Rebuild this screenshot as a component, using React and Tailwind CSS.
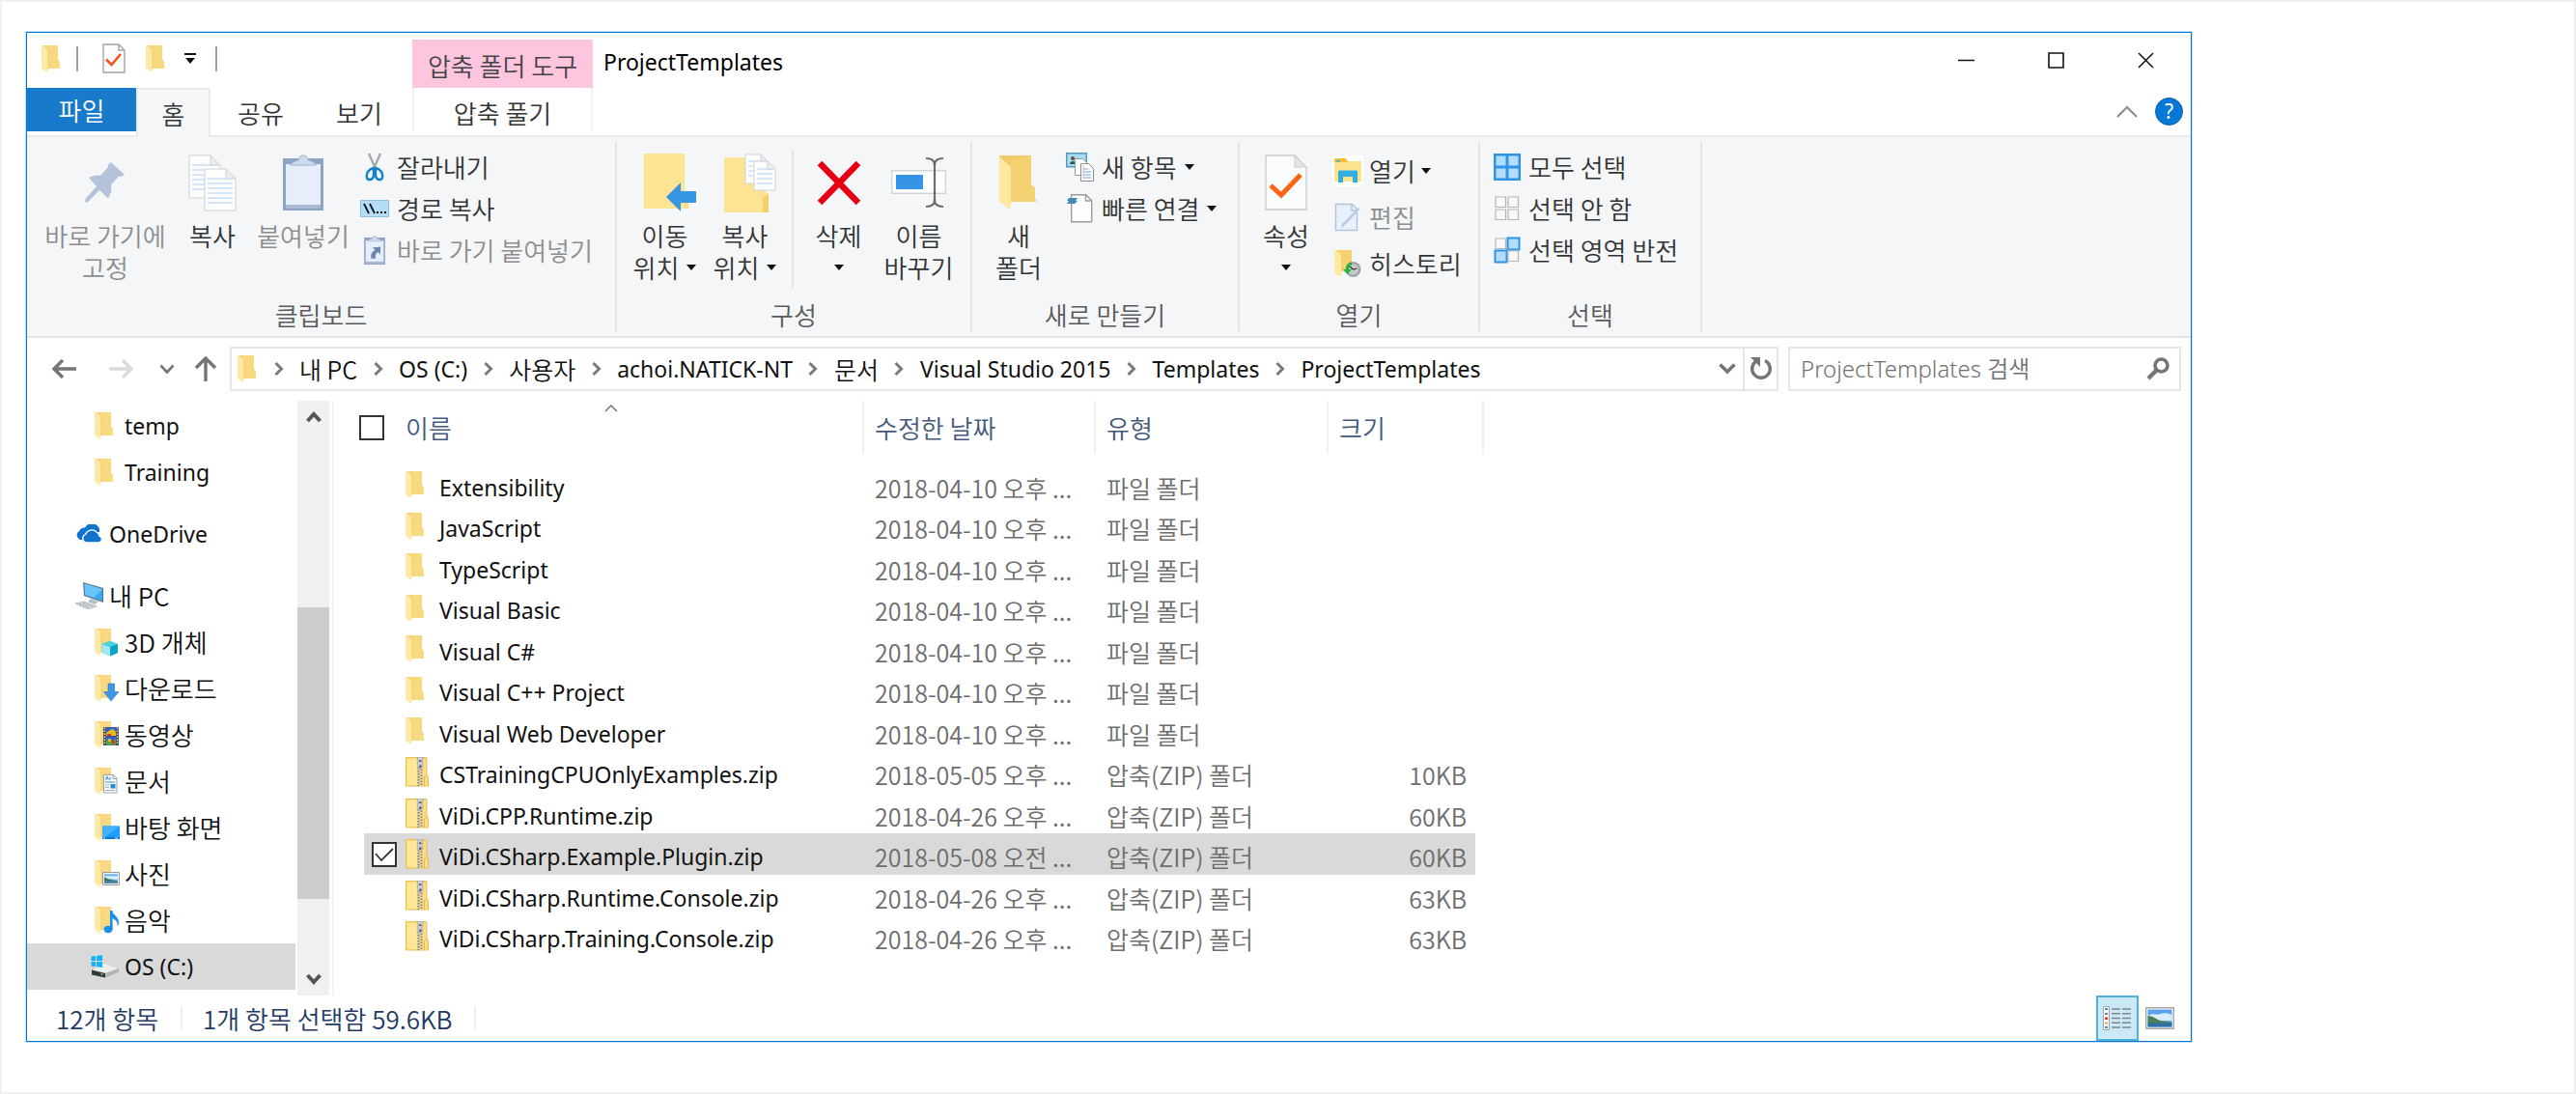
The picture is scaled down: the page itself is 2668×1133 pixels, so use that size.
import React from "react";

const KO = "font-['Noto_Sans_CJK_KR','Noto_Sans',sans-serif]";

/* ---------- small building icons ---------- */

function Folder({ className = "h-[28px] w-[19px]" }) {
  return (
    <svg viewBox="0 0 19 28" className={"shrink-0 " + className} aria-hidden="true">
      <path d="M1 0h16v14l2 4v6H5z" fill="#f6d57a" />
      <path d="M7 0h10v14l2 4v6H7z" fill="#f9d97f" />
      <path d="M0 1l1-1 5 4 1 3v17l-1 4-6-4z" fill="#fee9a6" />
      <path d="M6 5l1 2v17" fill="none" stroke="#ebc765" strokeWidth="0.7" />
    </svg>
  );
}

function Zip() {
  return (
    <svg viewBox="0 0 24 31" className="h-[31px] w-[24px] shrink-0" aria-hidden="true">
      <path d="M0.5 0.5h21.500V18l1.500 3v9H.5z" fill="#fbdd85" stroke="#ecc04a" />
      <path d="M2 2h10v27H2z" fill="#ffe798" />
      <path d="M19.500 30v-9l3-3" fill="none" stroke="#e9b93c" />
      <path d="M12 1h6v29h-6z" fill="#e9d59a" />
      <path d="M13.500 11v19" stroke="#77797c" strokeWidth="1.800" strokeDasharray="1.500 1.500" />
      <path d="M16.500 12.500v17.500" stroke="#8b8d90" strokeWidth="1.800" strokeDasharray="1.500 1.500" />
      <path d="M12 0h6.500l-1 5 .5 5-3 3-3-3 .5-5z" fill="#c9ccd1" stroke="#8f9296" strokeWidth=".5" />
      <path d="M14 3.500h2.500v1.500H14zM14.300 8.500h2v2.500h-2z" fill="#4c4f53" />
    </svg>
  );
}

/* Folder with a small badge at its lower right corner. */
function Badged({ children }) {
  return (
    <svg viewBox="0 0 26 29" className="h-[29px] w-[26px] shrink-0" aria-hidden="true">
      <path d="M1 0h16v14l2 4v6H5z" fill="#f8d981" />
      <path d="M0 1l1-1 5 4 1 3v17l-1 4-6-4z" fill="#fee9a6" />
      <path d="M6 5l1 2v17" fill="none" stroke="#ebc765" strokeWidth="0.7" />
      {children}
    </svg>
  );
}

const Badge3D = () => (
  <Badged>
    <path d="M7.500 16l8.500-3 8 3v9l-8 3.500-8.500-3.500z" fill="#2fc3dc" />
    <path d="M7.500 16l8.500 3v9.500L7.500 25z" fill="#a4e9f2" />
    <path d="M16 19l8-3v9l-8 3.500z" fill="#0ba3c7" />
    <path d="M7.500 16l8.500-3 8 3-8 3z" fill="#4fd0e0" />
  </Badged>
);
const BadgeDown = () => (
  <Badged>
    <path d="M14 9h6.500v8.500H25L17 27l-7.500-9.500H14z" fill="#3b97e6" stroke="#2277c9" strokeWidth=".6" />
  </Badged>
);
const BadgeVideo = () => (
  <Badged>
    <path d="M9 6h16v19H9z" fill="#4a4d54" />
    <path d="M12 6.500h10v8.500H12zM12 16h10v8.500H12z" fill="#2c62d6" />
    <path d="M12 12l4-3 3-1 3 3v4H12z" fill="#e8b91e" />
    <path d="M12 20l4-2 2 3 4-3v6.500H12z" fill="#5aa63c" />
    <path d="M13 13h4v2h-4zM18 20h3v3h-3z" fill="#d8321e" />
    <path d="M14 18h3v3h-3z" fill="#e8b91e" />
    <path d="M10.500 6.500v18M23.500 6.500v18" stroke="#d9dbe0" strokeWidth="1.400" strokeDasharray="1.500 1.500" />
  </Badged>
);
const BadgeDoc = () => (
  <Badged>
    <path d="M9.500 7.500h10l3.500 3.500v15h-13.500z" fill="#f8fafc" stroke="#9aa3ad" />
    <path d="M19 7.500v4h4" fill="none" stroke="#9aa3ad" />
    <path d="M11.500 12.500l1.500-3 1.500 3M16 10v2.500" fill="none" stroke="#3d97d3" strokeWidth="1.200" />
    <path d="M11 15h10" stroke="#58a6dd" strokeWidth="1.200" />
    <path d="M11 18h4M11 20.500h4M11 23.500h10" stroke="#a5abb1" strokeWidth="1.200" />
    <path d="M16.500 17h5v4.500h-5z" fill="#2c8bd0" />
  </Badged>
);
const BadgeDesktop = () => (
  <Badged>
    <path d="M8 12.500h18v13H8z" fill="#1a9dfc" />
    <path d="M8 12.500h18L11 24H8z" fill="#43b1ff" />
    <path d="M8 24h18v2H8z" fill="#0f79d3" />
    <path d="M9 24.500h2v1H9zM21 24.500h3v1h-3z" fill="#cfeaff" />
  </Badged>
);
const BadgePicture = () => (
  <Badged>
    <path d="M8.500 12.500h17v13h-17z" fill="#f6f6f6" stroke="#9a9a9a" />
    <path d="M10 14h14v10H10z" fill="#75bdf3" />
    <path d="M10 16.500h14v3H10z" fill="#dceffb" />
    <path d="M10 17.500l5 2 9 2v1H10z" fill="#44705a" />
    <path d="M10 21.500h14V24H10z" fill="#4c87b4" />
  </Badged>
);
const BadgeMusic = () => (
  <Badged>
    <ellipse cx="14" cy="23.500" rx="4.500" ry="3.800" fill="#1a8fee" />
    <path d="M16 4h2.500c0 5 7 6 6.500 13 0 2-1.200 3-1.500 3 .8-4-1.500-6-5-8v12H16z" fill="#1a8fee" />
  </Badged>
);

function Cloud() {
  return (
    <svg viewBox="0 0 29 20" className="h-[20px] w-[29px]" aria-hidden="true">
      <path d="M5 16a5 5 0 0 1-1-9A6 6 0 0 1 10 3.500a8 8 0 0 1 14-.5c1 1.200 1.300 3 1.200 4.500L12 16z" fill="#0f73cf" />
      <path d="M11 19a4.500 4.500 0 0 1-.5-8.500A7 7 0 0 1 22 8a5 5 0 0 1 2.800 4A3.600 3.600 0 0 1 24.500 19z" fill="#0f73cf" stroke="#fff" strokeWidth="1.300" />
    </svg>
  );
}

function Pc() {
  return (
    <svg viewBox="0 0 29 28" className="h-[28px] w-[29px]" aria-hidden="true">
      <path d="M8 0l21 6v15L9 14z" fill="#5b7185" />
      <path d="M9.500 1.500L28 7v12.500L10 13z" fill="#37a9f4" />
      <path d="M9.500 1.500L28 7l-9 9-9-3z" fill="#68c4fb" />
      <path d="M16 17l8 3-4 3-7-3z" fill="#b4bec6" />
      <path d="M0 22l9-2 13 5-9 3z" fill="#d5d9dc" stroke="#99a1a8" strokeWidth=".6" />
      <path d="M4 22.500l10 3.500M8 21.500l10 3.500" stroke="#8b949b" strokeWidth=".8" strokeDasharray="2 1" />
    </svg>
  );
}

function Drive() {
  return (
    <svg viewBox="0 0 30 24" className="h-[24px] w-[30px]" aria-hidden="true">
      <path d="M1 14l13-5 15 5v4l-14 5.500-14-3z" fill="#c4c6c8" />
      <path d="M14 9l15 5-14 5-14-3.500z" fill="#eceded" />
      <path d="M1 15.500L15 19v4.500L1 20.500z" fill="#34383b" />
      <path d="M15 19l14-5v3.500l-14 6z" fill="#b3b5b8" />
      <path d="M.5 1.500L5 1v5H.5zM6 .9L12 0v6H6zM.5 7H5v5l-4.500-.5zM6 7h6v6l-6-.9z" fill="#12b3f2" />
      <circle cx="11.500" cy="20" r="1" fill="#5fe36b" />
    </svg>
  );
}

const Caret = () => (
  <svg viewBox="0 0 10 6" className="h-[6px] w-[10px] shrink-0" aria-hidden="true">
    <path d="M0 0h10L5 6z" fill="#111" />
  </svg>
);

const CheckDoc = ({ className }) => (
  <svg viewBox="0 0 44 58" className={className} aria-hidden="true">
    <path d="M1 1h30l12 12v44H1z" fill="#fafbfc" stroke="#c8cacc" strokeWidth="1.300" />
    <path d="M31 1v12h12z" fill="#e3e6e8" stroke="#c8cacc" />
    <path d="M6 32l11 10L37 21" fill="none" stroke="#fb6415" strokeWidth="5" />
  </svg>
);

const SmallCheckDoc = () => (
  <svg viewBox="0 0 24 31" className="h-[31px] w-[24px]" aria-hidden="true">
    <path d="M1 1h16l6 6v23H1z" fill="#fafbfc" stroke="#a3a5a7" strokeWidth="1.400" />
    <path d="M17 1v6h6" fill="none" stroke="#a3a5a7" strokeWidth="1.400" />
    <path d="M4 16.500l5.500 5.500L19 11" fill="none" stroke="#f4561a" strokeWidth="2.600" />
  </svg>
);

/* ---------- ribbon icons ---------- */

const Pin = () => (
  <svg viewBox="0 0 42 42" className="h-[42px] w-[42px]" aria-hidden="true">
    <path d="M27 0l14 13-4 2-2-.5-8 9c1 5 0 9-3 14L15 29 2 42l-2-1 .500-3L12 25 4 16c4-2 8-3 12-2l8-9-.500-2z" fill="#b4c3da" />
  </svg>
);

function Sheet({ x, y, w, h, fold, stroke = "#cfd3d6", line = "#d5e6fa" }) {
  const rows = [];
  for (let i = y + fold; i < y + h - 4; i += 5) rows.push(i);
  return (
    <g>
      <path d={`M${x} ${y}h${w - fold}l${fold} ${fold}v${h - fold}h-${w}z`} fill="#fdfdfe" stroke={stroke} />
      {rows.map((r) => (
        <path key={r} d={`M${x + 3} ${r}h${w - 6}`} stroke={line} strokeWidth="2" />
      ))}
      <path d={`M${x + w - fold} ${y}v${fold}h${fold}z`} fill="#eceff1" stroke={stroke} />
    </g>
  );
}

const CopyIcon = () => (
  <svg viewBox="0 0 50 59" className="h-[59px] w-[50px]" aria-hidden="true">
    <Sheet x={1} y={1} w={32} h={44} fold={10} />
    <Sheet x={17} y={15} w={32} h={43} fold={10} />
  </svg>
);

const Clipboard = ({ className = "h-[58px] w-[42px]", arrow }) => (
  <svg viewBox="0 0 42 58" className={className} aria-hidden="true">
    <path d="M1.500 5.500h39v51h-39z" fill="#e6eefb" stroke="#8fa3c4" strokeWidth="3" />
    <path d="M3 52h36v4H3z" fill="#a9b9d4" />
    <path d="M3 5h36v5H3z" fill="#8fa3c4" />
    <path d="M8 11c1-3 4-4 8-5 0-3 2-5 5-5s5 2 5 5c4 1 7 2 8 5z" fill="#cddaee" stroke="#9db0cd" />
    {arrow && <path d="M14 46c-1-9 1-14 8-17l-5-5 16-2-1 16-4-5c-5 3-6 6-5 13z" fill="#6c84b0" />}
  </svg>
);

const Scissors = () => (
  <svg viewBox="0 0 20 30" className="h-[30px] w-[20px]" aria-hidden="true">
    <path d="M4 1l8 18M16 1L8 19" stroke="#a6a9ac" strokeWidth="2.400" />
    <path d="M9 16c-5 1-8 5-7 10 1 3 6 3 7-2zM11 16c5 1 8 5 7 10-1 3-6 3-7-2z" fill="none" stroke="#1482cb" strokeWidth="2.400" />
  </svg>
);

const PathIcon = () => (
  <svg viewBox="0 0 30 18" className="h-[18px] w-[30px]" aria-hidden="true">
    <path d="M.5.5h29v17H.5z" fill="#b3def9" stroke="#8cbfe3" />
    <path d="M4 4l5 10M10 4l5 10" stroke="#111" strokeWidth="1.800" />
    <path d="M17 12h2v2h-2zM21 12h2v2h-2zM25 12h2v2h-2z" fill="#111" />
  </svg>
);

const MoveTo = () => (
  <svg viewBox="0 0 54 60" className="h-[60px] w-[54px]" aria-hidden="true">
    <path d="M0 0h42v38l4 5v14H0z" fill="#fbdb83" />
    <path d="M0 0h42v57H0z" fill="#fde394" />
    <path d="M23 45l15-15v9h16v12H38v9z" fill="#3796e4" />
  </svg>
);

const CopyTo = () => (
  <svg viewBox="0 0 54 61" className="h-[61px] w-[54px]" aria-hidden="true">
    <path d="M0 4h42v34l4 5v18H0z" fill="#fde394" />
    <path d="M40 61V46l6-5v20z" fill="#f6cf6b" />
    <Sheet x={22} y={1} w={23} h={30} fold={7} />
    <Sheet x={31} y={8} w={22} h={30} fold={8} />
  </svg>
);

const DeleteIcon = () => (
  <svg viewBox="0 0 46 47" className="h-[47px] w-[46px]" aria-hidden="true">
    <path d="M3 3l40 41M43 3L3 44" stroke="#e60012" strokeWidth="6.500" />
  </svg>
);

const RenameIcon = () => (
  <svg viewBox="0 0 57 54" className="h-[54px] w-[57px]" aria-hidden="true">
    <path d="M.7 14.700h55.600v23.600H.7z" fill="#fdfdfd" stroke="#d2d5d8" strokeWidth="1.400" />
    <path d="M5 19h28v15H5z" fill="#3594e6" />
    <path d="M36 2c6 0 9 2 9 7 0-5 3-7 9-7M45 8v38M36 52c6 0 9-2 9-7 0 5 3 7 9 7" fill="none" stroke="#6d6d6d" strokeWidth="2.200" />
  </svg>
);

const NewFolder = () => (
  <svg viewBox="0 0 40 56" className="h-[56px] w-[40px]" aria-hidden="true">
    <path d="M30 48l9-3v3z" fill="#ddd" />
    <path d="M0 0h33v30l4 4v14H4z" fill="#efcb69" />
    <path d="M12 6L33 0v30l4 4v14H12z" fill="#f5d271" />
    <path d="M0 1l12 11v37l-1 7L0 47z" fill="#ffe89f" />
  </svg>
);

const NewItem = () => (
  <svg viewBox="0 0 29 30" className="h-[30px] w-[29px]" aria-hidden="true">
    <path d="M.7.7h20.600v14H.7z" fill="#a8dcf3" stroke="#5a97b8" strokeWidth="1.400" />
    <path d="M4 12c0-4 6-4 6 0z" fill="#24624b" />
    <circle cx="7" cy="6" r="2" fill="#6b4a2f" />
    <path d="M9.500 6.500h8l4 4v13h-12z" fill="#fff" stroke="#9a9a9a" />
    <path d="M15.500 11.500h8l5 5v13h-13z" fill="#fff" stroke="#8c8c8c" />
    <path d="M18 17h5M18 20h8M18 23h8M18 26h8" stroke="#9cc4ef" strokeWidth="1.500" />
    <path d="M18 13v15" stroke="#e9a0a0" strokeWidth=".8" />
  </svg>
);

const QuickLink = () => (
  <svg viewBox="0 0 27 31" className="h-[31px] w-[27px]" aria-hidden="true">
    <path d="M4.700 1.700h15l6 6v22h-21z" fill="#fdfdfd" stroke="#9c9c9c" strokeWidth="1.400" />
    <path d="M19.500 2v6h6" fill="none" stroke="#9c9c9c" strokeWidth="1.400" />
    <path d="M2 5h9l-2 3h2l-3 3H0l2-3H0z" fill="#4288b9" />
  </svg>
);

const OpenIcon = () => (
  <svg viewBox="0 0 32 32" className="h-[32px] w-[32px]" aria-hidden="true">
    <path d="M0 0h32v32H0z" fill="#fff" />
    <path d="M2 6h28v21H2z" fill="#fde28c" />
    <path d="M2 3h12l2 4H2z" fill="#f8c033" />
    <path d="M4 5h4v1.500H4z" fill="#3ab1e4" />
    <path d="M6 17c0-1 .5-1.500 1.500-1.500h17c1 0 1.500.5 1.500 1.500v11h-5v-6H11v6H6z" fill="#31afe3" />
  </svg>
);

const EditIcon = () => (
  <svg viewBox="0 0 28 30" className="h-[30px] w-[28px]" aria-hidden="true">
    <path d="M1.500 1.500h17l5 5v22h-22z" fill="#e8f0fb" stroke="#b2c3dd" strokeWidth="1.400" />
    <path d="M18 2v6h6" fill="none" stroke="#b2c3dd" strokeWidth="1.400" />
    <path d="M27 6L10 24l-3 2 1-4L25 5z" fill="#b9c9e0" />
  </svg>
);

const HistoryIcon = () => (
  <svg viewBox="0 0 28 29" className="h-[29px] w-[28px]" aria-hidden="true">
    <path d="M1 0h17v22H6z" fill="#f6d071" />
    <path d="M0 1l1-1 5 4 1 3v17l-1 4-6-4z" fill="#ffe9a3" />
    <circle cx="19.500" cy="20" r="8" fill="#a3a6a8" />
    <circle cx="19.500" cy="20" r="5.500" fill="#c7cacc" />
    <path d="M16 17l3.500 3 4-1" fill="none" stroke="#333" strokeWidth="1.200" />
    <path d="M9 20h3c0-4 2-7 6-7.500v3c-2 .5-3 2-3 4.500h3l-4.500 5z" fill="#22b33a" />
  </svg>
);

function Grid4({ on }) {
  const cells = [[2, 2], [15, 2], [2, 15], [15, 15]];
  return (
    <svg viewBox="0 0 28 28" className="h-[28px] w-[28px]" aria-hidden="true">
      {on.length === 4 && <path d="M0 0h28v28H0z" fill="#2f94e4" />}
      {cells.map(([x, y], i) =>
        on.includes(i) ? (
          <path key={i} d={`M${x - 0.5} ${y - 0.5}h12v12h-12z`} fill="#b3dcfd" stroke="#2f94e4" strokeWidth="2" />
        ) : (
          <path key={i} d={`M${x} ${y}h10.500v10.500h-10.500z`} fill="#f9f9f9" stroke="#b4b4b4" strokeWidth="1.200" />
        )
      )}
    </svg>
  );
}

/* ---------- ribbon parts ---------- */

function Big({ icon, lines, caret, className = "", dim, iconPad = "" }) {
  return (
    <button className={"flex flex-col items-center " + className}>
      <span className={"flex h-[80px] items-center justify-center pt-1 " + iconPad}>{icon}</span>
      {lines.map((l, i) => (
        <span key={l + i} className={"flex h-[33px] items-center gap-2 whitespace-nowrap " + (dim ? "text-[#8d8d8d]" : "text-[#333]")}>
          {l}
          {caret && i === lines.length - 1 && <Caret />}
        </span>
      ))}
    </button>
  );
}

function Small({ icon, label, caret, dim, iconBox = "w-[28px]", tall }) {
  return (
    <button className={"flex items-center whitespace-nowrap " + (tall ? "h-[48px] gap-1.5" : "h-[43px] gap-2")}>
      <span className={"flex shrink-0 items-center justify-center " + iconBox}>{icon}</span>
      <span className={dim ? "text-[#8d8d8d]" : "text-[#333]"}>{label}</span>
      {caret && <Caret />}
    </button>
  );
}

function Group({ label, className, children }) {
  return (
    <section className={"flex shrink-0 flex-col border-r-2 border-[#e2e4e6] " + className} aria-label={label}>
      <div className="flex flex-1 items-start">{children}</div>
      <div className="flex h-[34px] items-center justify-center text-[#5a5a5a]">{label}</div>
    </section>
  );
}

function Ribbon() {
  return (
    <div className={"flex h-[208px] border-b-2 border-[#e2e4e7] bg-[#f4f6f8] py-[5px] text-[26px] font-[350] leading-none " + KO}>
      <Group label="클립보드" className="w-[611px]">
        <Big className="ml-[13px] w-[136px]" icon={<Pin />} lines={["바로 가기에", "고정"]} dim />
        <Big className="w-[86px]" icon={<CopyIcon />} lines={["복사"]} />
        <Big className="w-[102px]" icon={<Clipboard />} lines={["붙여넣기"]} dim />
        <div className="ml-2 flex flex-col pt-1">
          <Small iconBox="w-[30px]" icon={<Scissors />} label="잘라내기" />
          <Small iconBox="w-[30px]" icon={<PathIcon />} label="경로 복사" />
          <Small iconBox="w-[30px]" icon={<Clipboard className="h-[30px] w-[22px]" arrow />} label="바로 가기 붙여넣기" dim />
        </div>
      </Group>
      <Group label="구성" className="w-[368px]">
        <Big className="ml-2 w-[83px]" icon={<MoveTo />} iconPad="pl-[10px]" lines={["이동", "위치"]} caret />
        <Big className="w-[83px]" icon={<CopyTo />} iconPad="pl-[10px]" lines={["복사", "위치"]} caret />
        <div className="ml-[7px] mt-2 h-[143px] w-0.5 bg-[#e2e4e6]" />
        <Big className="ml-[5px] w-[83px]" icon={<DeleteIcon />} lines={["삭제", ""]} caret />
        <Big className="w-[83px]" icon={<RenameIcon />} lines={["이름", "바꾸기"]} />
      </Group>
      <Group label="새로 만들기" className="w-[277px]">
        <Big className="ml-3 w-[72px]" icon={<NewFolder />} lines={["새", "폴더"]} />
        <div className="ml-3 flex flex-col pt-1">
          <Small iconBox="w-[30px]" icon={<NewItem />} label="새 항목" caret />
          <Small iconBox="w-[30px]" icon={<QuickLink />} label="빠른 연결" caret />
        </div>
      </Group>
      <Group label="열기" className="w-[249px]">
        <Big className="ml-3 w-[72px]" icon={<CheckDoc className="h-[58px] w-[44px]" />} lines={["속성", ""]} caret />
        <div className="ml-3 flex flex-col pt-1.5">
          <Small tall iconBox="w-[32px]" icon={<OpenIcon />} label="열기" caret />
          <Small tall iconBox="w-[32px]" icon={<EditIcon />} label="편집" dim />
          <Small tall iconBox="w-[32px]" icon={<HistoryIcon />} label="히스토리" />
        </div>
      </Group>
      <Group label="선택" className="w-[230px]">
        <div className="ml-[14px] flex flex-col pt-1">
          <Small icon={<Grid4 on={[0, 1, 2, 3]} />} label="모두 선택" />
          <Small icon={<Grid4 on={[]} />} label="선택 안 함" />
          <Small icon={<Grid4 on={[1, 2]} />} label="선택 영역 반전" />
        </div>
      </Group>
    </div>
  );
}

/* ---------- title bar and tabs ---------- */

function TitleBar() {
  return (
    <header className="flex h-[106px] justify-between">
      <div>
        <div className="flex h-[57px]">
          <div className="flex w-[399px] items-center pb-1">
            <Folder className="ml-[15px] h-[28px] w-[19px]" />
            <span className="ml-[17px] h-[26px] w-0.5 bg-[#a0a0a0]" />
            <button aria-label="속성" className="ml-[25px]">
              <SmallCheckDoc />
            </button>
            <button aria-label="새 폴더" className="ml-[21px]">
              <Folder />
            </button>
            <button aria-label="빠른 실행 도구 모음" className="ml-[21px]">
              <svg viewBox="0 0 12 12" className="h-[12px] w-[12px]" aria-hidden="true">
                <path d="M0 0h12v2H0zM1 5h10l-5 6z" fill="#111" />
              </svg>
            </button>
            <span className="ml-[20px] h-[26px] w-0.5 bg-[#a0a0a0]" />
          </div>
          <div className={"mt-[7px] flex w-[187px] items-center justify-center bg-[#fec5df] pt-1 text-[26px] font-[350] leading-none text-[#444] " + KO}>
            압축 폴더 도구
          </div>
          <h1 className="ml-[11px] pt-[14px] text-[23px] leading-[32px] text-black">ProjectTemplates</h1>
        </div>
        <nav className={"flex h-[49px] text-[26px] font-[350] leading-none text-[#333] " + KO}>
          <button className="h-[45px] w-[113px] bg-[#1979ca] text-white">파일</button>
          <button className="relative z-10 -mb-0.5 w-[77px] border-x-2 border-t-2 border-[#e8eaec] bg-[#f4f6f8]">홈</button>
          <button className="w-[104px] pt-0.5">공유</button>
          <button className="w-[100px] pt-0.5">보기</button>
          <button className="ml-[5px] h-[45px] w-[187px] border-x-2 border-[#f0f1f2] pt-1.5">압축 풀기</button>
        </nav>
      </div>
      <div className="flex flex-col items-end">
        <div className="flex h-[56px]">
          <button aria-label="최소화" className="flex w-[93px] items-center justify-center">
            <svg viewBox="0 0 17 17" className="h-[17px] w-[17px]"><path d="M0 8.500h17" stroke="#111" strokeWidth="1.500" /></svg>
          </button>
          <button aria-label="최대화" className="flex w-[93px] items-center justify-center">
            <svg viewBox="0 0 17 17" className="h-[17px] w-[17px]"><path d="M1 1h15v15H1z" fill="none" stroke="#111" strokeWidth="1.600" /></svg>
          </button>
          <button aria-label="닫기" className="flex w-[93px] items-center justify-center">
            <svg viewBox="0 0 17 17" className="h-[17px] w-[17px]"><path d="M1 1l15 15M16 1L1 16" stroke="#111" strokeWidth="1.500" /></svg>
          </button>
        </div>
        <div className="flex h-[50px] items-center gap-[18px] pr-[8px]">
          <button aria-label="리본 최소화">
            <svg viewBox="0 0 22 13" className="h-[13px] w-[22px]"><path d="M1 12L11 2l10 10" fill="none" stroke="#8a8a8a" strokeWidth="2" /></svg>
          </button>
          <button aria-label="도움말" className="flex h-[29px] w-[29px] items-center justify-center rounded-full border border-[#0a5ea8] bg-[#0678d7] text-[21px] leading-none text-white">?</button>
        </div>
      </div>
    </header>
  );
}

/* ---------- address bar ---------- */

const CRUMBS = ["내 PC", "OS (C:)", "사용자", "achoi.NATICK-NT", "문서", "Visual Studio 2015", "Templates", "ProjectTemplates"];

const Arrow = ({ color, className = "" }) => (
  <svg viewBox="0 0 26 20" className={"h-[20px] w-[26px] " + className} aria-hidden="true">
    <path d="M11 1L2 10l9 9M2 10h23" fill="none" stroke={color} strokeWidth="3.400" />
  </svg>
);

function AddressBar() {
  return (
    <div className="flex h-[65px] items-start pt-[9px]">
      <div className="flex h-[46px] w-[210px] items-center pl-[26px]">
        <button aria-label="뒤로"><Arrow color="#757575" /></button>
        <button aria-label="앞으로" className="ml-[32px]"><Arrow color="#dcdcdc" className="rotate-180" /></button>
        <button aria-label="최근 위치" className="ml-[27px]">
          <svg viewBox="0 0 16 11" className="h-[11px] w-[16px]"><path d="M1.500 1.500L8 8.500l6.500-7" fill="none" stroke="#757575" strokeWidth="2.600" /></svg>
        </button>
        <button aria-label="위로" className="ml-[20px]">
          <svg viewBox="0 0 24 26" className="h-[26px] w-[24px]"><path d="M2 12L12 2l10 10M12 2v24" fill="none" stroke="#757575" strokeWidth="3.400" /></svg>
        </button>
      </div>
      <div className="flex h-[46px] min-w-0 flex-1 items-center border-2 border-[#e6e6e6]">
        <Folder className="ml-1.5 h-[28px] w-[19px]" />
        <ol className="flex flex-1 items-center pl-[2px] text-[24px] leading-none text-[#111]">
          {CRUMBS.map((c) => (
            <li key={c} className="flex items-center whitespace-nowrap">
              <span className="flex w-[43px] justify-center">
                <svg viewBox="0 0 10 14" className="h-[14px] w-[10px]" aria-hidden="true"><path d="M1.500 1l6 6-6 6" fill="none" stroke="#7a7a7a" strokeWidth="3" /></svg>
              </span>
              <a href="#" className={/^[ -~]+$/.test(c) ? "text-[23px]" : "text-[25px] font-[350] " + KO}>{c}</a>
            </li>
          ))}
        </ol>
        <button aria-label="이전 위치" className="flex w-[32px] justify-center">
          <svg viewBox="0 0 18 12" className="h-[12px] w-[18px]"><path d="M1.500 1.500L9 9l7.500-7.500" fill="none" stroke="#757575" strokeWidth="3.600" /></svg>
        </button>
        <button aria-label="새로 고침" className="flex h-full w-[35px] items-center justify-center border-l-2 border-[#e6e6e6]">
          <svg viewBox="0 0 24 24" className="h-[24px] w-[24px]"><path d="M16 3.500a9.300 9.300 0 1 1-8 0" fill="none" stroke="#757575" strokeWidth="3.400" /><path d="M1 0h10v10z" fill="#757575" /></svg>
        </button>
      </div>
      <label className="ml-[10px] mr-[10px] flex h-[46px] w-[407px] items-center border-2 border-[#e6e6e6] pl-[11px] pr-[10px]">
        <input type="search" aria-label="ProjectTemplates 검색" placeholder="ProjectTemplates 검색" className="min-w-0 flex-1 text-[24px] font-[350] text-[#333] outline-none placeholder:text-[#707070]" />
        <svg viewBox="0 0 24 24" className="h-[24px] w-[24px]" aria-hidden="true">
          <circle cx="15.500" cy="8.500" r="6.500" fill="none" stroke="#757575" strokeWidth="3.600" />
          <path d="M11 13L2 22" stroke="#757575" strokeWidth="4.500" />
        </svg>
      </label>
    </div>
  );
}

/* ---------- navigation tree ---------- */

const TREE = [
  { label: "temp", icon: <Folder />, pad: "pl-[70px]" },
  { label: "Training", icon: <Folder />, pad: "pl-[70px]" },
  { label: "OneDrive", icon: <Cloud />, pad: "pl-[50px]", root: true },
  { label: "내 PC", icon: <Pc />, pad: "pl-[50px]", root: true },
  { label: "3D 개체", icon: <Badge3D />, pad: "pl-[70px]" },
  { label: "다운로드", icon: <BadgeDown />, pad: "pl-[70px]" },
  { label: "동영상", icon: <BadgeVideo />, pad: "pl-[70px]" },
  { label: "문서", icon: <BadgeDoc />, pad: "pl-[70px]" },
  { label: "바탕 화면", icon: <BadgeDesktop />, pad: "pl-[70px]" },
  { label: "사진", icon: <BadgePicture />, pad: "pl-[70px]" },
  { label: "음악", icon: <BadgeMusic />, pad: "pl-[70px]" },
  { label: "OS (C:)", icon: <Drive />, pad: "pl-[66px]", selected: true },
];

function NavPane() {
  return (
    <aside className="flex w-[318px] shrink-0 border-r-2 border-[#f3f3f3]">
      <ul className="flex w-[280px] flex-col pb-[6px] pt-[2px]">
        {TREE.map((t) => (
          <li key={t.label} className={t.root ? "mt-4" : ""}>
            <a href="#" className={"flex h-[48px] items-center leading-none text-[#111] " + t.pad + (t.selected ? " mr-0.5 bg-[#d9d9d9]" : "")}>
              <span className={"flex items-center " + (t.root || t.selected ? "w-[35px]" : "w-[31px]")}>{t.icon}</span>
              <span className={/^[ -~]+$/.test(t.label) ? "text-[23px]" : "text-[26px] font-[350] " + KO}>{t.label}</span>
            </a>
          </li>
        ))}
      </ul>
      <div className="flex w-[33px] flex-col bg-[#f0f0f0]">
        <button aria-label="위로 스크롤" className="flex h-[34px] items-center justify-center">
          <svg viewBox="0 0 16 14" className="h-[14px] w-[16px]"><path d="M1.500 11L8 4l6.500 7" fill="none" stroke="#555" strokeWidth="4" /></svg>
        </button>
        <span className="grow-[180]" />
        <span className="grow-[302] bg-[#cdcdcd]" />
        <span className="grow-[66]" />
        <button aria-label="아래로 스크롤" className="flex h-[34px] items-center justify-center">
          <svg viewBox="0 0 16 14" className="h-[14px] w-[16px]"><path d="M1.500 3L8 10l6.500-7" fill="none" stroke="#555" strokeWidth="4" /></svg>
        </button>
      </div>
    </aside>
  );
}

/* ---------- file list ---------- */

const FILES = [
  ["Extensibility", "2018-04-10 오후 ...", "파일 폴더", ""],
  ["JavaScript", "2018-04-10 오후 ...", "파일 폴더", ""],
  ["TypeScript", "2018-04-10 오후 ...", "파일 폴더", ""],
  ["Visual Basic", "2018-04-10 오후 ...", "파일 폴더", ""],
  ["Visual C#", "2018-04-10 오후 ...", "파일 폴더", ""],
  ["Visual C++ Project", "2018-04-10 오후 ...", "파일 폴더", ""],
  ["Visual Web Developer", "2018-04-10 오후 ...", "파일 폴더", ""],
  ["CSTrainingCPUOnlyExamples.zip", "2018-05-05 오후 ...", "압축(ZIP) 폴더", "10KB"],
  ["ViDi.CPP.Runtime.zip", "2018-04-26 오후 ...", "압축(ZIP) 폴더", "60KB"],
  ["ViDi.CSharp.Example.Plugin.zip", "2018-05-08 오전 ...", "압축(ZIP) 폴더", "60KB"],
  ["ViDi.CSharp.Runtime.Console.zip", "2018-04-26 오후 ...", "압축(ZIP) 폴더", "63KB"],
  ["ViDi.CSharp.Training.Console.zip", "2018-04-26 오후 ...", "압축(ZIP) 폴더", "63KB"],
];
const SELECTED = 9;

const BOX = "block h-[26px] w-[26px] appearance-none border-2 border-[#333] bg-white";

function FileList() {
  const head = "border-l-2 border-[#f0f0f0] pl-[11px] text-left font-[350]";
  return (
    <div className="min-w-0 flex-1 pl-[21px]">
      <table className={"w-[1169px] table-fixed border-collapse whitespace-nowrap text-[25px] leading-none " + KO}>
        <colgroup>
          <col className="w-[10px]" />
          <col className="w-[43px]" />
          <col className="w-[474px]" />
          <col className="w-[240px]" />
          <col className="w-[241px]" />
          <col className="w-[153px]" />
          <col className="w-[8px]" />
        </colgroup>
        <thead>
          <tr className="h-[55px] text-[26px] text-[#44597a]">
            <th colSpan={2} className="pl-[5px]">
              <input type="checkbox" aria-label="모두 선택" className={BOX} />
            </th>
            <th className="relative text-left font-[350]">
              이름
              <svg viewBox="0 0 14 8" className="absolute left-[206px] top-[4px] h-[8px] w-[14px]" aria-hidden="true"><path d="M1 7l6-6 6 6" fill="none" stroke="#777" strokeWidth="1.500" /></svg>
            </th>
            <th className={head}>수정한 날짜</th>
            <th className={head}>유형</th>
            <th colSpan={2} className={head + " border-r-2"}>크기</th>
          </tr>
        </thead>
        <tbody className="before:block before:h-[11px] before:content-['']">
          {FILES.map(([name, date, type, size], i) => {
            const bg = i === SELECTED ? "bg-[#d9d9d9] " : "";
            return (
              <tr key={name} className="h-[42px] font-[350] text-[#6d6d6d] even:h-[43px]">
                <td />
                <td className={bg + "pl-[8px]"}>
                  {i === SELECTED && (
                    <span className="relative block h-[26px] w-[26px]">
                      <input type="checkbox" defaultChecked aria-label={name} className={BOX} />
                      <svg viewBox="0 0 26 26" className="pointer-events-none absolute inset-0 h-[26px] w-[26px]"><path d="M4 12l6 7L22 7" fill="none" stroke="#333" strokeWidth="1.800" /></svg>
                    </span>
                  )}
                </td>
                <td className={bg + "font-['Noto_Sans',sans-serif] text-[23px] font-normal text-[#111]"}>
                  <span className="flex items-center">
                    <span className="flex w-[35px]">{size ? <Zip /> : <Folder />}</span>
                    <span className="pt-1.5">{name}</span>
                  </span>
                </td>
                <td className={bg + "pl-[12px] pt-1.5"}>{date}</td>
                <td className={bg + "pl-[12px] pt-1.5"}>{type}</td>
                <td className={bg + "pr-[9px] pt-1.5 text-right"}>{size}</td>
                <td />
              </tr>
            );
          })}
        </tbody>
      </table>
    </div>
  );
}

/* ---------- status bar ---------- */

function StatusBar() {
  return (
    <footer className={"flex h-[47px] items-stretch justify-between text-[26px] font-[350] leading-none text-[#1f3a63] " + KO}>
      <div className="flex items-center pl-[30px]">
        <span className="w-[129px]">12개 항목</span>
        <span className="h-[24px] w-0.5 bg-[#eceef0]" />
        <span className="w-[302px] pl-[21px]">1개 항목 선택함 59.6KB</span>
        <span className="h-[24px] w-0.5 bg-[#eceef0]" />
      </div>
      <div className="flex items-center pr-[17px]">
        <button aria-label="자세히" className="flex h-full w-[44px] items-center justify-center border-2 border-[#4fb2dd] bg-[#cbe8f6]">
          <svg viewBox="0 0 30 26" className="h-[26px] w-[30px]" aria-hidden="true">
            <path d="M.5.5h6v24h-6z" fill="#fff" stroke="#a5a5a5" />
            <path d="M2 2h3v2H2zM2 21h3v2H2z" fill="#3f8fcb" />
            <path d="M2 7h3v2H2z" fill="#8a70a8" />
            <path d="M2 11.500h3v2.500H2z" fill="#dd3a2a" />
            <path d="M2 16.500h3v2H2z" fill="#c6b05a" />
            <path d="M9 3h9M20 3h9M9 7.700h9M20 7.700h9M9 12.500h9M20 12.500h9M9 17.300h9M20 17.300h9M9 22h9M20 22h9" stroke="#7d868c" strokeWidth="1.600" />
          </svg>
        </button>
        <button aria-label="큰 아이콘" className="ml-[7px]">
          <svg viewBox="0 0 30 23" className="h-[23px] w-[30px]" aria-hidden="true">
            <path d="M.7.7h28.600v21.600H.7z" fill="#fff" stroke="#a6a6a6" strokeWidth="1.400" />
            <path d="M2.500 2.500h25v18h-25z" fill="#5aa2ee" />
            <path d="M2.500 9c5-4 10 0 13-2 4-1 8-1 12 1v6h-25z" fill="#d8ecfb" />
            <path d="M2.500 9c5 0 8 3 13 5l12 2v1h-25z" fill="#4d7f57" />
            <path d="M2.500 16.500h25v4h-25z" fill="#2f6fa8" />
          </svg>
        </button>
      </div>
    </footer>
  );
}

export default function App() {
  return (
    <div className="min-h-screen border-2 border-[#f0f0f0] bg-white pb-[50px] pl-[25px] pr-[396px] pt-[31px] font-['Noto_Sans','Noto_Sans_CJK_KR',sans-serif]">
      <main className="min-w-[1800px] border border-[#0078d7] bg-white ring-1 ring-[#c3e0f7]">
        <TitleBar />
        <div className="border-t-2 border-[#e8eaec]">
          <Ribbon />
        </div>
        <AddressBar />
        <div className="flex">
          <NavPane />
          <FileList />
        </div>
        <StatusBar />
      </main>
    </div>
  );
}
